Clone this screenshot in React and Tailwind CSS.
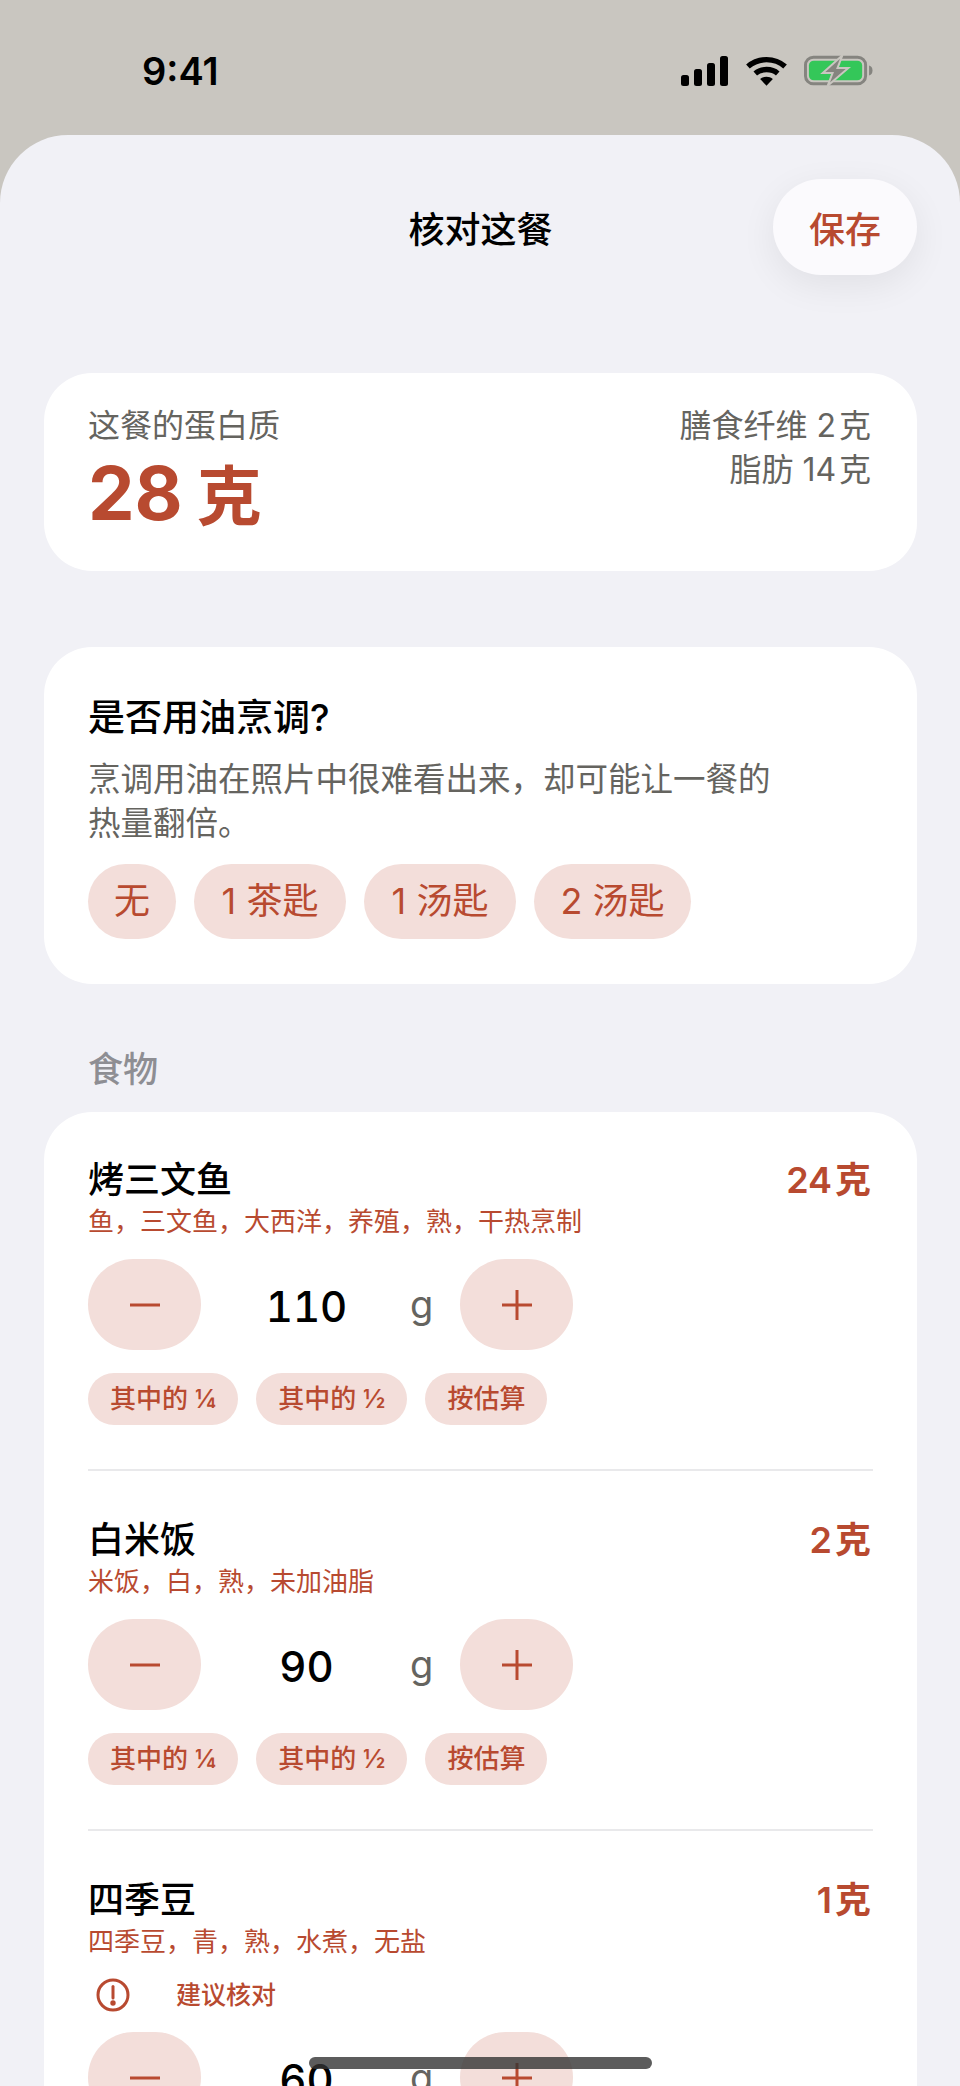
import React from "react";

const foods = [
  { name: "烤三文鱼", protein: "24\u200a克", detail: "鱼，三文鱼，大西洋，养殖，熟，干热烹制", amount: 110 },
  { name: "白米饭", protein: "2\u200a克", detail: "米饭，白，熟，未加油脂", amount: 90 },
  { name: "四季豆", protein: "1\u200a克", detail: "四季豆，青，熟，水煮，无盐", amount: 60, warn: true },
];

function StatusIcons() {
  return (
    <div className="flex items-center gap-[16px]">
      {/* signal */}
      <svg width="48" height="30" viewBox="0 0 48 30" fill="#000">
        <rect x="0" y="19" width="8" height="11" rx="2.5" />
        <rect x="13" y="13" width="8" height="17" rx="2.5" />
        <rect x="26" y="7" width="8" height="23" rx="2.5" />
        <rect x="39" y="0" width="8" height="30" rx="2.5" />
      </svg>
      {/* wifi */}
      <svg width="43" height="30" viewBox="0 0 44 30" fill="none" stroke="#000" strokeWidth="5.5">
        <path d="M3 10.5C13.5 1 30.5 1 41 10.5" />
        <path d="M10.5 17.5C16.5 12.2 27.5 12.2 33.5 17.5" />
        <path d="M22 30L15.5 23.2C19 20.2 25 20.2 28.5 23.2Z" fill="#000" stroke="none" />
      </svg>
      {/* battery charging */}
      <svg width="69" height="31" viewBox="0 0 70 31" className="overflow-visible">
        <rect x="1.5" y="2" width="61" height="27" rx="8" fill="none" stroke="#85847f" strokeWidth="3" />
        <rect x="5" y="5.500" width="54" height="20" rx="5" fill="#34c759" />
        <path d="M66 10.500C68.500 11 69.500 13 69.500 15.500C69.500 18 68.500 20 66 20.500Z" fill="#85847f" />
        <path d="M39 0L19 18H29L24 31L45 13H34Z" fill="#85847f" stroke="#c9c6c0" strokeWidth="2" />
      </svg>
    </div>
  );
}

function Chip({ children }) {
  return (
    <div className="h-[52px] px-[22px] rounded-[26px] bg-[#f3deda] text-[#b84a30] text-[26px] leading-[52px] font-medium whitespace-nowrap">
      {children}
    </div>
  );
}

function StepButton({ sign }) {
  return (
    <div className="w-[113px] h-[91px] rounded-[46px] bg-[#f3deda] flex items-center justify-center">
      <svg width="32" height="32" viewBox="0 0 32 32" stroke="#b84a30" strokeWidth="3">
        <path d="M1 16H31" />
        {sign === "plus" && <path d="M16 1V31" />}
      </svg>
    </div>
  );
}

function FoodRow({ food, first }) {
  return (
    <div className={first ? "pt-[46px] pb-[44px]" : "pt-[47px] pb-[44px] border-t-2 border-[#e9e9eb]"}>
      <div className="flex justify-between h-[44px] leading-[44px] pr-[2px]">
        <div className="text-[36px] font-medium text-black">{food.name}</div>
        <div className="text-[36px] font-semibold text-[#b84a30]">{food.protein}</div>
      </div>
      <div className="mt-[2px] h-[36px] leading-[36px] text-[26px] text-[#b84a30]">{food.detail}</div>
      {food.warn && (
        <div className="mt-[15px] h-[40px] flex items-center text-[#b84a30]">
          <svg className="ml-[8px]" width="34" height="34" viewBox="0 0 34 34" fill="none" stroke="#b84a30" strokeWidth="3">
            <circle cx="17" cy="17" r="15" />
            <path d="M17 8.500V20" strokeLinecap="round" />
            <circle cx="17" cy="25" r="1.200" fill="#b84a30" />
          </svg>
          <div className="ml-[46px] text-[25px] leading-[40px] font-medium">建议核对</div>
        </div>
      )}
      <div className={`${food.warn ? "mt-[17px]" : "mt-[19px]"} flex items-center h-[91px]`}>
        <StepButton sign="minus" />
        <div className="w-[211px] h-[91px] text-center text-[42px] font-[550] tabular-nums text-black leading-[95px]">{food.amount}</div>
        <div className="w-[48px] h-[91px] -ml-[2px] mr-[2px] text-[38px] text-[#65645f] leading-[91px]">g</div>
        <StepButton sign="plus" />
      </div>
      <div className="mt-[23px] flex gap-[18px]">
        <Chip>其中的 ¼</Chip>
        <Chip>其中的 ½</Chip>
        <Chip>按估算</Chip>
      </div>
    </div>
  );
}

export default function App() {
  return (
    <div
      className="relative w-[960px] h-[2086px] overflow-hidden bg-[#c9c6c0] flex flex-col"
      style={{ fontFamily: 'Inter, "Noto Sans CJK SC", sans-serif' }}
    >
      {/* status bar */}
      <div className="h-[135px] shrink-0 flex justify-between items-start pl-[142px] pr-[87px] pt-[55px]">
        <div className="text-[38px] leading-[32px] font-semibold text-black">9:41</div>
        <StatusIcons />
      </div>

      {/* sheet */}
      <div className="flex-1 bg-[#f1f1f6] rounded-t-[68px] pl-[44px] pr-[43px] pt-[44px]">
        <div className="grid grid-cols-[1fr_auto_1fr] items-center">
          <div />
          <div className="pt-[5px] text-[36px] font-medium text-black">核对这餐</div>
          <div className="justify-self-end w-[144px] h-[96px] pt-[5px] rounded-[48px] bg-[#fbfafd] shadow-[0_10px_36px_rgba(0,0,0,0.07)] flex items-center justify-center text-[36px] font-medium text-[#b84a30]">
            保存
          </div>
        </div>

        {/* protein summary */}
        <div className="mt-[98px] h-[198px] bg-white rounded-[48px] pl-[44px] pr-[46px] pt-[31px] flex justify-between">
          <div>
            <div className="text-[32px] leading-[44px] text-[#65645f]">这餐的蛋白质</div>
            <div className="mt-[3px] flex items-baseline h-[85px] leading-[85px] font-bold text-[#b84a30]">
              <span className="text-[74px]">28</span>
              <span className="ml-[14px] text-[65px]">克</span>
            </div>
          </div>
          <div className="text-right text-[32px] leading-[44px] text-[#65645f]">
            <div>{"膳食纤维 2\u200a克"}</div>
            <div>{"脂肪 14\u200a克"}</div>
          </div>
        </div>

        {/* cooking oil */}
        <div className="mt-[76px] bg-white rounded-[48px] px-[44px] pt-[49px] pb-[45px]">
          <div className="text-[37px] leading-[44px] font-medium text-black">是否用油烹调?</div>
          <div className="mt-[18px] max-w-[700px] text-[32.500px] leading-[44px] text-[#65645f]">
            烹调用油在照片中很难看出来，却可能让一餐的热量翻倍。
          </div>
          <div className="mt-[18px] flex gap-[18px] text-[36px] leading-[75px] text-[#b84a30]">
            <div className="w-[88px] h-[75px] text-center rounded-[38px] bg-[#f3deda]">无</div>
            <div className="w-[152px] h-[75px] text-center rounded-[38px] bg-[#f3deda]">1 茶匙</div>
            <div className="w-[152px] h-[75px] text-center rounded-[38px] bg-[#f3deda]">1 汤匙</div>
            <div className="w-[157px] h-[75px] text-center rounded-[38px] bg-[#f3deda]">2 汤匙</div>
          </div>
        </div>

        <div className="mt-[62px] ml-[44px] text-[35px] leading-[46px] font-medium text-[#8e8e93]">食物</div>

        {/* food list, runs off the bottom of the screen */}
        <div className="mt-[20px] bg-white rounded-t-[48px] px-[44px] h-[1200px]">
          {foods.map((food, i) => (
            <FoodRow key={food.name} food={food} first={i === 0} />
          ))}
        </div>
      </div>

      {/* home indicator */}
      <div className="absolute left-[309px] top-[2057px] w-[343px] h-[12px] rounded-full bg-[#333333]/80" />
    </div>
  );
}
